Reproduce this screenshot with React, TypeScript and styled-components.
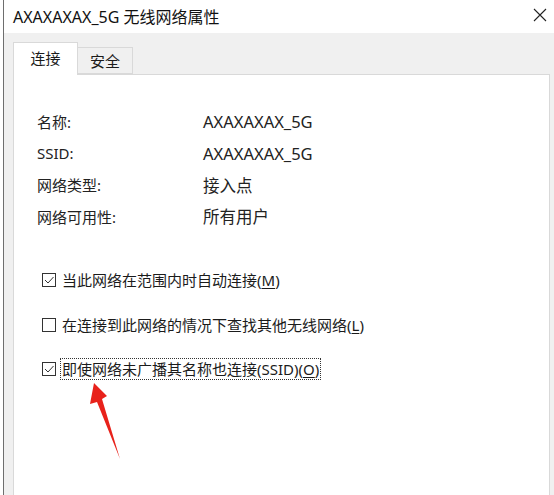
import React from 'react';
import styled, { createGlobalStyle } from 'styled-components';

const GlobalStyle = createGlobalStyle`
  html, body {
    margin: 0;
    padding: 0;
    background: #ffffff;
  }
  body {
    font-family: "Noto Sans", "Noto Sans CJK SC", sans-serif;
    color: #1b1b1b;
  }
`;

const Window = styled.div`
  position: relative;
  margin-left: 3px;
  width: 551px;
  height: 495px;
  border-left: 1px solid #6e6e6e;
  display: flex;
  flex-direction: column;
  overflow: hidden;
`;

const TitleBar = styled.div`
  height: 33px;
  flex-shrink: 0;
  background: #ffffff;
  display: flex;
  align-items: center;
  justify-content: space-between;
  padding: 0 8px 0 9px;
`;

const Title = styled.div`
  font-size: 16px;
  color: #111;
  margin-top: -2px;
`;

const CloseButton = styled.div`
  width: 14px;
  height: 14px;
  margin-top: -4px;
  display: flex;
`;

const Body = styled.div`
  flex: 1;
  background: #f0f0f0;
  padding: 9px 5px 0 9px;
  display: flex;
  flex-direction: column;
`;

const TabStrip = styled.div`
  display: flex;
  align-items: flex-end;
  height: 32px;
  position: relative;
  z-index: 1;
`;

const Tab = styled.div<{ $active?: boolean }>`
  height: ${p => (p.$active ? '33px' : '27px')};
  padding: ${p => (p.$active ? '0 0 4px 0' : '0')};
  width: ${p => (p.$active ? '65px' : '55px')};
  box-sizing: border-box;
  background: ${p => (p.$active ? '#ffffff' : '#f0f0f0')};
  border: 1px solid #d9d9d9;
  border-bottom: ${p => (p.$active ? 'none' : '1px solid #d9d9d9')};
  border-left: ${p => (p.$active ? '1px solid #d9d9d9' : 'none')};
  margin-bottom: ${p => (p.$active ? '-1px' : '0')};
  display: flex;
  align-items: center;
  justify-content: center;
  font-size: 15px;
  color: #1b1b1b;
`;

const Panel = styled.div`
  flex: 1;
  background: #ffffff;
  border: 1px solid #d9d9d9;
  border-bottom: none;
  padding: 31px 0 0 23px;
`;

const InfoGrid = styled.div`
  display: grid;
  grid-template-columns: 166px auto;
  grid-auto-rows: 31.5px;
  align-items: center;
  font-size: 15px;
  color: #222;
`;

const Label = styled.div``;
const Value = styled.div`
  font-size: 16.5px;
`;

const Options = styled.div`
  margin-top: 38px;
  display: flex;
  flex-direction: column;
  gap: 24.5px;
  padding-left: 5px;
`;

const Option = styled.div`
  display: flex;
  align-items: center;
  height: 20px;
  font-size: 15px;
  color: #1b1b1b;
`;

const Box = styled.div`
  width: 14px;
  height: 14px;
  box-sizing: border-box;
  border: 1px solid #333;
  background: #fff;
  margin-right: 5px;
  display: flex;
  align-items: center;
  justify-content: center;
`;

const OptionText = styled.span<{ $focus?: boolean }>`
  padding: 0 1px;
  outline: ${p => (p.$focus ? '1px dotted #333' : 'none')};
  line-height: 20px;
`;

const Key = styled.u`
  text-underline-offset: 2px;
`;

const Arrow = styled.svg`
  position: absolute;
  left: 80px;
  top: 380px;
`;

function Check() {
  return (
    <svg width="12" height="12" viewBox="0 0 12 12">
      <path d="M2 6 L5 9 L10.5 3" fill="none" stroke="#333" strokeWidth="1" />
    </svg>
  );
}

const rows: [string, string][] = [
  ['名称:', 'AXAXAXAX_5G'],
  ['SSID:', 'AXAXAXAX_5G'],
  ['网络类型:', '接入点'],
  ['网络可用性:', '所有用户'],
];

export default function App() {
  return (
    <>
      <GlobalStyle />
      <Window>
        <TitleBar>
          <Title>AXAXAXAX_5G 无线网络属性</Title>
          <CloseButton>
            <svg width="14" height="14" viewBox="0 0 14 14">
              <path d="M1 1 L13 13 M13 1 L1 13" stroke="#222" strokeWidth="1.1" />
            </svg>
          </CloseButton>
        </TitleBar>
        <Body>
          <TabStrip>
            <Tab $active>连接</Tab>
            <Tab>安全</Tab>
          </TabStrip>
          <Panel>
            <InfoGrid>
              {rows.map(([l, v]) => (
                <React.Fragment key={l}>
                  <Label>{l}</Label>
                  <Value>{v}</Value>
                </React.Fragment>
              ))}
            </InfoGrid>
            <Options>
              <Option>
                <Box><Check /></Box>
                <OptionText>当此网络在范围内时自动连接(<Key>M</Key>)</OptionText>
              </Option>
              <Option>
                <Box />
                <OptionText>在连接到此网络的情况下查找其他无线网络(<Key>L</Key>)</OptionText>
              </Option>
              <Option>
                <Box><Check /></Box>
                <OptionText $focus>即使网络未广播其名称也连接(SSID)(<Key>O</Key>)</OptionText>
              </Option>
            </Options>
          </Panel>
        </Body>
        <Arrow width="40" height="82" viewBox="0 0 40 82">
          <polygon points="10,3 23,16 18,19 36,79 13,22 6,24" fill="#e8221b" />
        </Arrow>
      </Window>
    </>
  );
}
